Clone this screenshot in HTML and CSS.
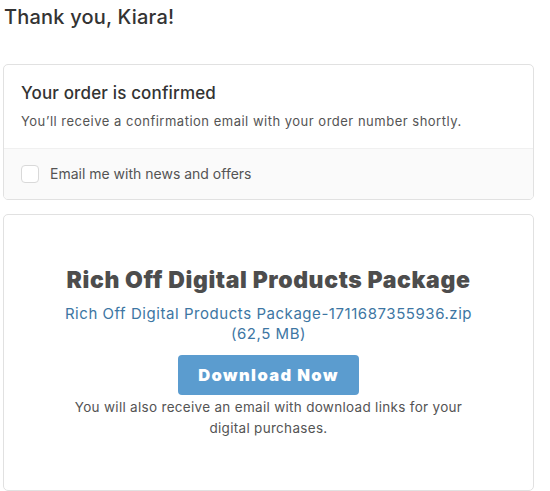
FILE: index.html
```html
<!DOCTYPE html>
<html>
<head>
<meta charset="utf-8">
<link rel="stylesheet" href="styles.css">
</head>
<body>
<div class="page">
  <h1 class="thanks">Thank you, Kiara!</h1>
  <section class="card confirm">
    <div class="confirm-top">
      <h2 class="confirm-title">Your order is confirmed</h2>
      <p class="confirm-text">You’ll receive a confirmation email with your order number shortly.</p>
    </div>
    <label class="confirm-opt">
      <span class="checkbox"></span>
      <span class="opt-label">Email me with news and offers</span>
    </label>
  </section>
  <section class="card download">
    <h2 class="dl-title">Rich Off Digital Products Package</h2>
    <a class="dl-link" href="#">Rich Off Digital Products Package-1711687355936.zip<br>(62,5 MB)</a>
    <a class="dl-btn" href="#">Download Now</a>
    <p class="dl-note">You will also receive an email with download links for your<br>digital purchases.</p>
  </section>
</div>
</body>
</html>
```
FILE: styles.css
```css
* { box-sizing: border-box; }
html, body { margin: 0; padding: 0; background: #fff; }
body { font-family: Inter, "Noto Sans", sans-serif; color: #333; }
.page { padding: 0 16px 0 3px; display: flex; flex-direction: column; }
.thanks { margin: 4px 0 0 1px; font-size: 20px; font-weight: 500; line-height: 26px; color: #333; letter-spacing: 0.2px; }
.card { border: 1px solid #e1e1e1; border-radius: 5px; background: #fff; }
.confirm { margin-top: 34px; overflow: hidden; }
.confirm-top { padding: 17px 17px 18px; }
.confirm-title { margin: 0; font-size: 17px; font-weight: 500; line-height: 22px; color: #333; letter-spacing: 0.15px; }
.confirm-text { margin: 8px 0 0; font-size: 13px; line-height: 18px; color: #545454; letter-spacing: 0.5px; }
.confirm-opt { display: flex; align-items: center; gap: 11px; padding: 16px 17px 16px 17px; background: #fafafa; border-top: 1px solid #f0f0f0; }
.checkbox { width: 18px; height: 18px; border: 1px solid #d9d9d9; border-radius: 4px; background: #fff; flex: none; }
.opt-label { font-size: 14px; color: #545454; line-height: 18px; }
.download { margin-top: 14px; padding: 51px 20px 51px; display: flex; flex-direction: column; align-items: center; text-align: center; }
.dl-title { margin: 0; font-size: 23px; font-weight: 900; line-height: 28px; color: #4d4d4d; letter-spacing: 0.6px; }
.dl-link { margin-top: 10px; font-size: 15px; line-height: 20px; color: #3d76a3; text-decoration: none; letter-spacing: 0.55px; }
.dl-btn { margin-top: 11px; width: 181px; height: 40px; display: flex; align-items: center; justify-content: center; background: #5b9ccf; border-radius: 4px; color: #fff; font-weight: 900; font-size: 16.5px; text-decoration: none; letter-spacing: 1.4px; }
.dl-note { margin: 2px 0 0; font-size: 13.5px; line-height: 21px; color: #545454; letter-spacing: 0.3px; }
```
